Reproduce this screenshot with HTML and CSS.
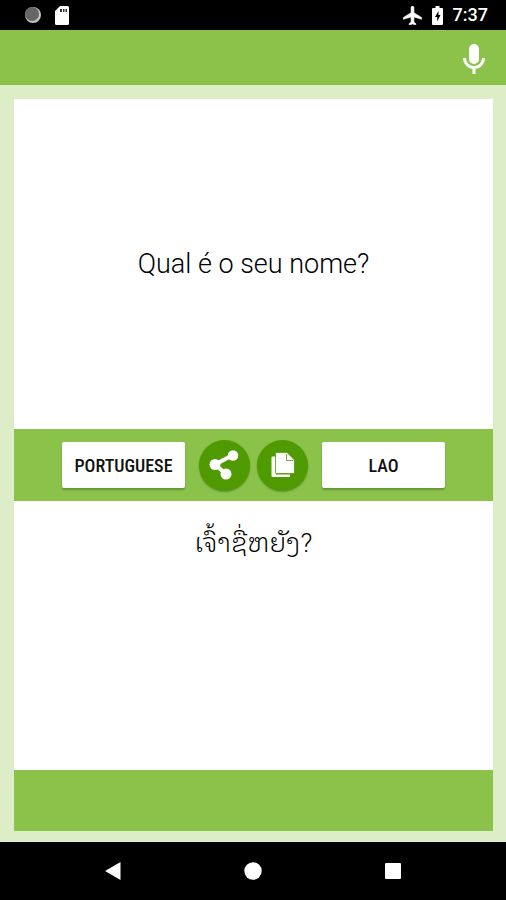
FILE: index.html
```html
<!DOCTYPE html>
<html lang="en">
<head>
    <meta charset="utf-8">
    <meta name="viewport" content="width=device-width, initial-scale=1">
    <title>Portuguese-Lao Translator</title>
    <link rel="stylesheet" href="styles.css">
</head>
<body>
    <div class="status-bar">
        <div class="status-group notifications">
            <svg width="18" height="18" viewBox="0 0 18 18">
                <circle cx="9" cy="9" r="8" fill="#c4c4c4"/>
                <circle cx="8" cy="8" r="7" fill="#666"/>
            </svg>
            <svg width="14" height="19" viewBox="0 0 14 19">
                <path fill="#fff" d="M5 0h7.500a1.500 1.500 0 0 1 1.500 1.500v16a1.500 1.500 0 0 1-1.500 1.500h-11A1.500 1.500 0 0 1 0 17.500V5z"/>
                <path fill="#333" d="M5 3h2v3H5zM8 3h1.500v3H8zM10.500 3h1.500v3h-1.500z"/>
            </svg>
        </div>
        <div class="status-group">
            <svg width="19" height="19" viewBox="2 2 19 20">
                <path fill="#fff" stroke="#fff" stroke-width=".6" d="M21 16v-2l-8-5V3.500c0-.83-.67-1.500-1.500-1.500S10 2.670 10 3.500V9l-8 5v2l8-2.500V19l-2 1.500V22l3.500-1 3.500 1v-1.500L13 19v-5.500l8 2.500z"/>
            </svg>
            <svg width="11" height="19" viewBox="0 0 11 19">
                <path fill="#fff" d="M3.500 0h4v2H10a1 1 0 0 1 1 1v15a1 1 0 0 1-1 1H1a1 1 0 0 1-1-1V3a1 1 0 0 1 1-1h2.500z"/>
                <path fill="#000" d="M6.500 5 3 11h2.200v4.500L8.500 9H6.500z"/>
            </svg>
            <span class="clock">7:37</span>
        </div>
    </div>

    <header class="app-bar">
        <button type="button" class="icon-button" aria-label="Speak">
            <svg width="22" height="30" viewBox="0 0 22 30">
                <rect x="6" y="0" width="10" height="20" rx="5" fill="#fff"/>
                <path d="M1.500 14a9.500 9.500 0 0 0 19 0M11 23.500V30" fill="none" stroke="#fff" stroke-width="3"/>
            </svg>
        </button>
    </header>

    <main class="content">
        <div class="translator">
            <div class="source">
                <textarea class="source-text" rows="1" lang="pt" aria-label="Text to translate" spellcheck="false">Qual é o seu nome?</textarea>
            </div>

            <div class="toolbar">
                <button type="button" class="lang-button">PORTUGUESE</button>
                <button type="button" class="round-button" aria-label="Share">
                    <svg width="32" height="30" viewBox="0 0 32 30">
                        <path d="M24 5 6 14.500l11 9.500" fill="none" stroke="#fff" stroke-width="4"/>
                        <circle cx="24" cy="5.500" r="5.300" fill="#fff"/>
                        <circle cx="6" cy="14.500" r="5.500" fill="#fff"/>
                        <circle cx="17" cy="24" r="5.500" fill="#fff"/>
                    </svg>
                </button>
                <button type="button" class="round-button" aria-label="Copy">
                    <svg width="24" height="26" viewBox="0 0 24 26">
                        <path d="M1.500 4.500H5v18h14V25H1.500a1 1 0 0 1-1-1V5.500a1 1 0 0 1 1-1z" fill="#fff"/>
                        <path d="M4.500 1.500a1 1 0 0 1 1-1H16l7.500 7.500v12.500a1 1 0 0 1-1 1h-17a1 1 0 0 1-1-1z" fill="#fff" stroke="#4f9a00" stroke-width=".8"/>
                        <path d="M15.500 2v6.500h6.500" fill="none" stroke="#4f9a00" stroke-width=".8"/>
                    </svg>
                </button>
                <button type="button" class="lang-button">LAO</button>
            </div>

            <div class="result">
                <p class="result-text" lang="lo">ເຈົ້າຊື່ຫຍັງ?</p>
            </div>

            <div class="bottom-bar"></div>
        </div>
    </main>

    <nav class="nav-bar">
        <button type="button" class="nav-button" aria-label="Back">
            <svg width="18" height="18" viewBox="0 0 18 18"><path d="M16.500 0v18L1 9z" fill="#fff"/></svg>
        </button>
        <button type="button" class="nav-button" aria-label="Home">
            <svg width="18" height="18" viewBox="0 0 18 18"><circle cx="9" cy="9" r="8.700" fill="#fff"/></svg>
        </button>
        <button type="button" class="nav-button" aria-label="Recent apps">
            <svg width="18" height="18" viewBox="0 0 18 18"><rect x="1" y="1" width="16" height="16" rx="1" fill="#fff"/></svg>
        </button>
    </nav>
</body>
</html>
```
FILE: styles.css
```css
* {
    box-sizing: border-box;
}
body {
    margin: 0;
    min-height: 100vh;
    display: flex;
    flex-direction: column;
    font-family: Roboto, "Noto Sans", sans-serif;
    background-color: #dcedc8;
    color: #000;
}
button {
    border: none;
    padding: 0;
    background: none;
    cursor: pointer;
}
svg {
    display: block;
}

/* Status bar */
.status-bar {
    display: flex;
    justify-content: space-between;
    align-items: center;
    height: 30px;
    padding: 0 18px 0 24px;
    background-color: #000;
}
.status-group {
    display: flex;
    align-items: center;
    gap: 10px;
}
.notifications {
    gap: 13px;
}
.clock {
    color: #fff;
    font-size: 18px;
    font-weight: 500;
    line-height: 30px;
}

/* App bar */
.app-bar {
    display: flex;
    justify-content: flex-end;
    align-items: center;
    height: 55px;
    padding: 2px 21px 0;
    background-color: #8bc34a;
}

.content {
    flex: 1;
    display: flex;
    padding: 14px 13px 11px 14px;
}
.translator {
    flex: 1;
    display: flex;
    flex-direction: column;
    background-color: #fff;
}
.source {
    flex: 330 1 0;
    display: flex;
    align-items: center;
}
.source-text {
    width: 100%;
    height: 40px;
    padding: 0;
    border: none;
    outline: none;
    resize: none;
    overflow: hidden;
    background: none;
    color: #000;
    font-family: inherit;
    font-size: 27px;
    font-weight: 300;
    line-height: 40px;
    text-align: center;
}

/* Language buttons */
.toolbar {
    display: flex;
    justify-content: center;
    align-items: center;
    gap: 14px;
    height: 72px;
    background-color: #8bc34a;
}
.lang-button {
    width: 123px;
    height: 46px;
    border-radius: 2px;
    background-color: #fff;
    box-shadow: 0 2px 2px rgba(0, 0, 0, 0.25);
    color: #111;
    font-family: "Roboto Condensed", "Liberation Sans Narrow", Roboto, sans-serif;
    font-size: 18px;
    font-weight: 500;
}
.round-button {
    display: flex;
    justify-content: center;
    align-items: center;
    width: 51px;
    height: 51px;
    border-radius: 50%;
    background-color: #4f9a00;
    box-shadow: 0 1px 2px rgba(0, 0, 0, 0.3);
}
.round-button + .round-button {
    margin-left: -7px;
}

.result {
    flex: 269 1 0;
}
.result-text {
    margin: 20px;
    font-family: Roboto, "Noto Sans Lao Looped", "Noto Sans Lao", "DejaVu Sans", sans-serif;
    font-size: 26px;
    font-weight: 300;
    line-height: 44px;
    text-align: center;
}
.bottom-bar {
    height: 61px;
    background-color: #8bc34a;
}

/* System navigation */
.nav-bar {
    display: flex;
    justify-content: center;
    align-items: center;
    height: 58px;
    background-color: #000;
}
.nav-button {
    display: flex;
    justify-content: center;
    width: 140px;
}
```
